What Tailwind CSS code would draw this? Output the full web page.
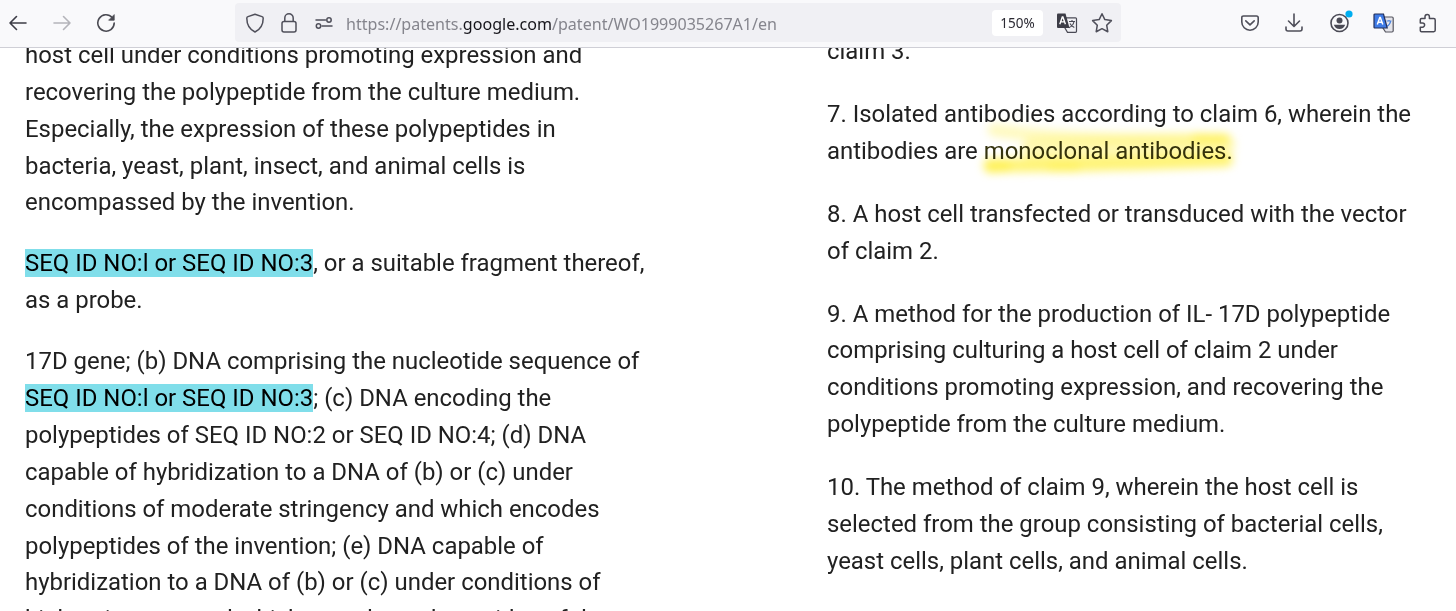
<!DOCTYPE html>
<html lang="en">
<head>
  <meta charset="UTF-8">
  <meta name="viewport" content="width=device-width, initial-scale=1.0">
  <title>WO1999035267A1 - Google Patents</title>
  <script src="https://cdn.jsdelivr.net/npm/@tailwindcss/browser@4"></script>
</head>
<body class="h-[611px] overflow-hidden bg-white font-['Roboto',sans-serif] text-[#212121]">
  <!-- Browser toolbar -->
  <header class="flex h-12 items-start border-b border-[#cfcfd6] bg-[#f9f9fb] text-[#4a4a55]">
    <nav class="flex h-[46px] w-[235px] items-center pl-2">
      <button><svg class="size-5" viewBox="0 0 20 20" fill="none" stroke="#3c3c46" stroke-width="1.6" stroke-linecap="round" stroke-linejoin="round"><path d="M18 10H2M8.500 3.500L2 10l6.500 6.500"/></svg></button>
      <button class="ml-6"><svg class="size-5" viewBox="0 0 20 20" fill="none" stroke="#b4b4ba" stroke-width="1.6" stroke-linecap="round" stroke-linejoin="round"><path d="M2 10h16M11.500 3.500L18 10l-6.500 6.500"/></svg></button>
      <button class="ml-6"><svg class="size-5" viewBox="0 0 20 20" fill="none" stroke="#4a4a52" stroke-width="1.6" stroke-linecap="round"><path d="M16.200 4.600A8.200 8.200 0 1 0 18.200 10"/><path d="M18.200 2v5.200H13z" fill="#4a4a52" stroke-width=".8" stroke-linejoin="round"/></svg></button>
    </nav>
    <div class="mt-[3px] flex h-[39px] w-[886px] items-center rounded bg-[#f0f0f4] pl-[9px] pr-[7px]">
      <svg class="h-5 w-[22px]" viewBox="0 0 22 20" fill="none" stroke="#4f4f5a" stroke-width="1.5" stroke-linejoin="round"><path d="M11 1.200L18 3.600q1.200.4 1.200 1.600C19.200 12 16 16.500 11 19 6 16.500 2.800 12 2.800 5.200q0-1.200 1.200-1.600z"/></svg>
      <svg class="ml-3 h-5 w-[22px]" viewBox="0 0 22 20" fill="none" stroke="#4f4f5a" stroke-width="1.5"><rect x="4" y="8.500" width="14" height="10.500" rx="2"/><path d="M6.800 8.500V5a4.200 4.200 0 0 1 8.400 0v3.500"/></svg>
      <svg class="ml-[13px] h-5 w-[22px]" viewBox="0 0 22 20" fill="none" stroke="#4f4f5a" stroke-width="1.5" stroke-linecap="round"><path d="M3 7h9.500M9 13h10"/><circle cx="16" cy="7" r="2.200"/><circle cx="5.500" cy="13" r="2.200"/></svg>
      <span class="ml-[11px] w-[432px] whitespace-nowrap pt-[3px] font-['Noto_Sans',sans-serif] text-[16.07px] text-[#85858d]">https://patents.<span class="text-[#15141a]">google.com</span>/patent/WO1999035267A1/en</span>
      <span class="ml-auto flex h-[26px] w-[51px] items-center justify-center rounded bg-white pt-px font-['Noto_Sans',sans-serif] text-[13.5px] text-[#2b2a33]">150%</span>
      <svg class="ml-[13px] h-5 w-[22px]" viewBox="0 0 22 20"><path d="M10 4.800h9.500q1 0 1 1v12.500q0 1-1 1h-8L9 15z" fill="#f0f0f4" stroke="#4a4a55" stroke-width="1.2"/><path d="M13 8.500h6M16 7v1.500M18 8.500c-.5 3-2.500 5-5 6.200M14 10.500c.8 1.800 2.300 3 4.300 4" fill="none" stroke="#4a4a55" stroke-width="1.1"/><path d="M2 .5h7.500l4 14.500H2q-1 0-1-1V1.500q0-1 1-1z" fill="#3c3c46"/><path d="M3.800 11.200L6.300 4h.6l2.500 7.200M4.800 8.900h3.600" fill="none" stroke="#fff" stroke-width="1.4"/></svg>
      <svg class="ml-3 h-[22px] w-6" viewBox="0 0 22 20" fill="none" stroke="#4f4f5a" stroke-width="1.4" stroke-linejoin="round"><path d="M11 1.500l2.600 5.400 6 .9-4.300 4.200 1 6L11 15.200 5.700 18l1-6L2.400 7.800l6-.9z"/></svg>
    </div>
    <div class="flex h-[46px] items-center pl-[119px]">
      <svg class="h-[22px] w-5" viewBox="0 0 20 22" fill="none" stroke="#4f4f5a" stroke-width="1.6" stroke-linecap="round" stroke-linejoin="round"><path d="M3.500 4h13q1.700 0 1.700 1.700V10a8.200 8.200 0 0 1-16.400 0V5.700Q1.800 4 3.500 4z"/><path d="M5.800 8.800l4.200 4 4.200-4"/></svg>
      <svg class="ml-6 h-[22px] w-5" viewBox="0 0 20 22" fill="none" stroke="#4f4f5a" stroke-width="1.6" stroke-linecap="round" stroke-linejoin="round"><path d="M10 2v12M4.500 9l5.500 5.500L15.500 9M2 15v2q0 2 2 2h12q2 0 2-2v-2"/></svg>
      <svg class="ml-6 h-[26px] w-[26px]" viewBox="0 0 26 26"><circle cx="11.500" cy="13" r="8.500" fill="none" stroke="#4a4a55" stroke-width="1.6"/><circle cx="11.500" cy="10.600" r="3" fill="#4a4a55"/><path d="M5.800 14.800h11.400q-1.500 4.200-5.700 4.200t-5.700-4.200z" fill="#4a4a55"/><circle cx="21" cy="4" r="3.600" fill="#00aef0"/></svg>
      <svg class="ml-[19px] h-[22px] w-[22px]" viewBox="0 0 22 22"><path d="M11 5h8q1.200 0 1.200 1.200v12.600q0 1.200-1.200 1.200h-6.500L10 16z" fill="#e4e4ea" stroke="#55555f" stroke-width="1.2"/><path d="M13.500 9h5M16 8v1M17.700 9c-.5 3-2 4.500-4 5.500" fill="none" stroke="#4b84e0" stroke-width="1.2"/><path d="M2 2h8.500l3.700 14H2q-1 0-1-1V3q0-1 1-1z" fill="#3f7be6" stroke="#23305c" stroke-width="1.2"/><path d="M4.300 12.500L6.800 5.500h.5l2.500 7M5.200 10.300h3.700" fill="none" stroke="#fff" stroke-width="1.5"/></svg>
      <svg class="ml-[23px] h-[22px] w-5" viewBox="0 0 20 22" fill="none" stroke="#4a4a55" stroke-width="1.5" stroke-linejoin="round"><path d="M7 6.500V4.700a2.200 2.200 0 0 1 4.400 0v1.800h4.400q1.400 0 1.400 1.400v10.400q0 1.400-1.400 1.400H3.500q-1.200 0-1.200-1.200v-3.300h2.200a2.100 2.100 0 0 0 0-4.200H2.300V7.700q0-1.200 1.200-1.200z"/></svg>
    </div>
  </header>

  <main class="flex h-[563px] overflow-hidden whitespace-nowrap text-[23.93px] leading-[36.85px]">
    <!-- Description -->
    <section class="-mt-[11px] w-[802px] space-y-[24.2px] pl-[25px]">
      <p>host cell under conditions promoting expression and<br>recovering the polypeptide from the culture medium.<br>Especially, the expression of these polypeptides in<br>bacteria, yeast, plant, insect, and animal cells is<br>encompassed by the invention.</p>
      <p><mark class="bg-[#80deea] text-black">SEQ ID NO:l or SEQ ID NO:3</mark>, or a suitable fragment thereof,<br>as a probe.</p>
      <p>17D gene; (b) DNA comprising the nucleotide sequence of<br><mark class="bg-[#80deea] text-black">SEQ ID NO:l or SEQ ID NO:3</mark>; (c) DNA encoding the<br>polypeptides of SEQ ID NO:2 or SEQ ID NO:4; (d) DNA<br>capable of hybridization to a DNA of (b) or (c) under<br>conditions of moderate stringency and which encodes<br>polypeptides of the invention; (e) DNA capable of<br>hybridization to a DNA of (b) or (c) under conditions of<br>high stringency and which encodes polypeptides of the</p>
    </section>
    <!-- Claims -->
    <section class="-mt-[15px] space-y-[26.1px] pl-[25px]">
      <p>claim 3.</p>
      <p>7. Isolated antibodies according to claim 6, wherein the<br>antibodies are <span class="relative inline-block text-[#35330f]">monoclonal antibodies.<svg class="absolute -left-3 -top-4 mix-blend-multiply" width="284" height="74" viewBox="0 0 284 74" fill="none" stroke-linecap="round"><g class="blur-[4px]" stroke="#fff04a"><path d="M22 13Q90 24 252 22" stroke-width="13" opacity=".35"/><path d="M60 32Q130 30 252 28" stroke-width="22" opacity=".4"/><path d="M18 48Q110 49 254 43" stroke-width="14" opacity=".75"/><path d="M224 21L253 22" stroke-width="9" opacity=".6"/><path d="M18 51L34 50" stroke-width="10" opacity=".8"/><path d="M80 51L104 51" stroke-width="8" opacity=".6"/></g></svg></span></p>
      <p>8. A host cell transfected or transduced with the vector<br>of claim 2.</p>
      <p>9. A method for the production of IL- 17D polypeptide<br>comprising culturing a host cell of claim 2 under<br>conditions promoting expression, and recovering the<br>polypeptide from the culture medium.</p>
      <p>10. The method of claim 9, wherein the host cell is<br>selected from the group consisting of bacterial cells,<br>yeast cells, plant cells, and animal cells.</p>
    </section>
  </main>
</body>
</html>
